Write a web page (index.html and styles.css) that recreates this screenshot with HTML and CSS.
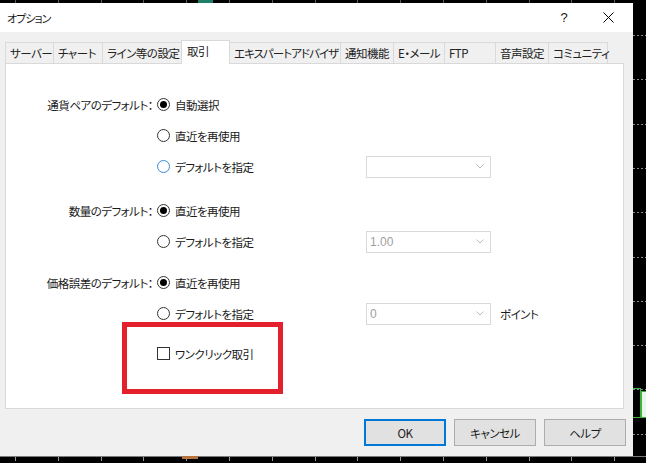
FILE: index.html
```html
<!DOCTYPE html>
<html lang="ja">
<head>
<meta charset="utf-8">
<title>オプション</title>
<link rel="stylesheet" href="styles.css">
</head>
<body>
<div class="desk">
  <div class="chart">
    <div class="top-ticks"></div>
    <div class="mark-top"></div>
    <div class="grid-right"></div>
    <div class="candle-a"></div>
    <div class="candle-b"></div>
    <div class="axis"></div>
    <div class="mark-bottom"></div>
  </div>

  <div class="dialog">
    <div class="titlebar">
      <span class="title">オプション</span>
      <div class="tb-btns">
        <span class="tb-btn help">?</span>
        <span class="tb-btn close">
          <svg width="11" height="11" viewBox="0 0 11 11"><path d="M0.5 0.5 L10.5 10.5 M10.5 0.5 L0.5 10.5" stroke="#000" stroke-width="1" fill="none"/></svg>
        </span>
      </div>
    </div>

    <div class="body">
      <div class="tabs">
        <div class="tab t1">サーバー</div>
        <div class="tab t2">チャート</div>
        <div class="tab t3">ライン等の設定</div>
        <div class="tab t4 active">取引</div>
        <div class="tab t5">エキスパートアドバイザ</div>
        <div class="tab t6">通知機能</div>
        <div class="tab t7">E・メール</div>
        <div class="tab t8">FTP</div>
        <div class="tab t9">音声設定</div>
        <div class="tab t10">コミュニティ</div>
      </div>

      <div class="panel">
        <div class="group g1">
          <div class="row">
            <span class="lbl">通貨ペアのデフォルト：</span>
            <span class="opt"><span class="radio checked"></span><span class="otext">自動選択</span></span>
          </div>
          <div class="row">
            <span class="lbl"></span>
            <span class="opt"><span class="radio"></span><span class="otext">直近を再使用</span></span>
          </div>
          <div class="row">
            <span class="lbl"></span>
            <span class="opt"><span class="radio hover"></span><span class="otext">デフォルトを指定</span></span>
            <span class="combo"><span class="cval"></span><svg class="chev" width="8" height="5" viewBox="0 0 8 5"><path d="M0.5 0.5 L4 4 L7.5 0.5" stroke="#b8b8b8" fill="none"/></svg></span>
          </div>
        </div>

        <div class="group g2">
          <div class="row">
            <span class="lbl">数量のデフォルト：</span>
            <span class="opt"><span class="radio checked"></span><span class="otext">直近を再使用</span></span>
          </div>
          <div class="row">
            <span class="lbl"></span>
            <span class="opt"><span class="radio"></span><span class="otext">デフォルトを指定</span></span>
            <span class="combo"><span class="cval">1.00</span><svg class="chev" width="8" height="5" viewBox="0 0 8 5"><path d="M0.5 0.5 L4 4 L7.5 0.5" stroke="#b8b8b8" fill="none"/></svg></span>
          </div>
        </div>

        <div class="group g3">
          <div class="row">
            <span class="lbl">価格誤差のデフォルト：</span>
            <span class="opt"><span class="radio checked"></span><span class="otext">直近を再使用</span></span>
          </div>
          <div class="row">
            <span class="lbl"></span>
            <span class="opt"><span class="radio"></span><span class="otext">デフォルトを指定</span></span>
            <span class="combo"><span class="cval">0</span><svg class="chev" width="8" height="5" viewBox="0 0 8 5"><path d="M0.5 0.5 L4 4 L7.5 0.5" stroke="#b8b8b8" fill="none"/></svg></span>
            <span class="unit">ポイント</span>
          </div>
        </div>

        <div class="row check-row">
          <span class="lbl"></span>
          <span class="opt"><span class="checkbox"></span><span class="otext">ワンクリック取引</span></span>
        </div>

        <div class="highlight"></div>
      </div>

      <div class="buttons">
        <div class="btn default">OK</div>
        <div class="btn">キャンセル</div>
        <div class="btn">ヘルプ</div>
      </div>
    </div>
  </div>
</div>
</body>
</html>
```

FILE: styles.css
```css
* { box-sizing: border-box; }

html, body {
  margin: 0;
  padding: 0;
}

body {
  background: #000;
  font-family: "Noto Sans CJK JP", "Noto Sans", sans-serif;
  font-size: 11.5px;
  letter-spacing: -0.5px;
  line-height: 16px;
  color: #1a1a1a;
  font-feature-settings: "palt";
}

.desk {
  position: relative;
  width: 646px;
  height: 463px;
  overflow: hidden;
  padding-top: 3px;
}

/* ---------- chart behind the dialog ---------- */
.chart {
  position: absolute;
  inset: 0;
}

.top-ticks {
  position: absolute;
  left: 0;
  top: 0;
  width: 646px;
  height: 3px;
  background: repeating-linear-gradient(to right, transparent 0 15px, #5a5a5a 15px 16px, transparent 16px 42.8px);
}

.mark-top {
  position: absolute;
  left: 198px;
  top: 0;
  width: 15px;
  height: 3px;
  background: #1e7f68;
}

.grid-right {
  position: absolute;
  left: 633px;
  top: 0;
  width: 13px;
  height: 456px;
  background: repeating-linear-gradient(to bottom, transparent 0 35px, #8a8a8a 35px 36px, transparent 36px 44.3px);
  -webkit-mask-image: repeating-linear-gradient(to right, #000 0 2px, transparent 2px 4px);
  mask-image: repeating-linear-gradient(to right, #000 0 2px, transparent 2px 4px);
}

.candle-a {
  position: absolute;
  left: 633px;
  top: 388px;
  width: 8px;
  height: 30px;
  border: 1px solid #3cb43c;
  border-left: none;
}

.candle-b {
  position: absolute;
  left: 641px;
  top: 391px;
  width: 7px;
  height: 27px;
  background: #e6f7e6;
  border: 1px solid #3cb43c;
}

.axis {
  position: absolute;
  left: 0;
  top: 456px;
  width: 646px;
  height: 7px;
  border-top: 1px solid #7a7a7a;
  background: repeating-linear-gradient(to right, transparent 0 15px, #9a9a9a 15px 16px, transparent 16px 42.8px) 0 0 / 646px 4px no-repeat;
}

.mark-bottom {
  position: absolute;
  left: 182px;
  top: 456px;
  width: 16px;
  height: 3px;
  background: #b8743c;
}

/* ---------- dialog ---------- */
.dialog {
  position: relative;
  width: 633px;
  height: 453px;
  background: #f0f0f0;
  display: flex;
  flex-direction: column;
}

.titlebar {
  height: 29px;
  background: #fff;
  display: flex;
  align-items: center;
  justify-content: space-between;
}

.title {
  padding-left: 7px;
  font-size: 11px;
  letter-spacing: -1px;
}

.tb-btns {
  display: flex;
  padding-right: 3px;
  height: 29px;
}

.tb-btn {
  width: 43px;
  height: 29px;
  display: flex;
  align-items: center;
  justify-content: center;
}

.help {
  font-family: "Liberation Sans", sans-serif;
  font-size: 13px;
  letter-spacing: 0;
  padding-right: 3px;
}

.body {
  flex: 1;
  padding-left: 5px;
}

/* ---------- tabs ---------- */
.tabs {
  display: flex;
  align-items: flex-end;
  height: 32px;
}

.tab {
  height: 22px;
  padding-left: 4px;
  padding-top: 2px;
  border-top: 1px solid #dadada;
  border-left: 1px solid #dadada;
  background: #f0f0f0;
  white-space: nowrap;
  color: #222;
}

.tab.t10 { border-right: 1px solid #dadada; }

.t1 { width: 48px; }
.t2 { width: 49px; }
.t3 { width: 79px; }
.t4 { width: 49px; }
.t5 { width: 110px; letter-spacing: -0.95px; }
.t6 { width: 53px; }
.t7 { width: 51px; }
.t8 { width: 51px; }
.t9 { width: 53px; }
.t10 { width: 60px; }

.tab.active {
  position: relative;
  z-index: 2;
  height: 24px;
  background: #fff;
  border: 1px solid #d9d9d9;
  border-bottom: none;
  padding-left: 5px;
  padding-top: 2px;
}

.tab.active + .tab { border-left: none; }

/* ---------- panel ---------- */
.panel {
  position: relative;
  margin-top: -1px;
  width: 619px;
  height: 346px;
  background: #fff;
  border: 1px solid #d9d9d9;
  padding-top: 25px;
}

.group.g2 { margin-top: 13px; }
.group.g3 { margin-top: 10px; }

.row {
  display: flex;
  align-items: center;
  height: 31px;
}

.lbl {
  width: 147px;
  margin-right: 4px;
  text-align: right;
  white-space: nowrap;
}

.opt {
  display: flex;
  align-items: center;
  width: 209px;
}

.otext {
  margin-left: 5px;
  white-space: nowrap;
}

.radio {
  width: 13px;
  height: 13px;
  border: 1px solid #333;
  border-radius: 50%;
  background: #fff;
  display: flex;
  align-items: center;
  justify-content: center;
  flex: none;
}

.radio.checked::after {
  content: "";
  width: 7px;
  height: 7px;
  border-radius: 50%;
  background: #000;
}

.radio.hover {
  border-color: #3a8bd8;
}

.checkbox {
  width: 13px;
  height: 13px;
  border: 1px solid #333;
  background: #fff;
  flex: none;
}

.combo {
  width: 125px;
  height: 22px;
  border: 1px solid #d9d9d9;
  background: #fff;
  display: flex;
  align-items: center;
  justify-content: space-between;
  padding: 0 6px 0 3px;
  color: #a0a0a0;
}

.cval {
  font-family: "Liberation Sans", "Noto Sans", sans-serif;
  font-size: 12px;
  letter-spacing: 0;
}

.unit {
  margin-left: 9px;
}

.check-row {
  margin-top: 9px;
}

.highlight {
  position: absolute;
  left: 116px;
  top: 258px;
  width: 161px;
  height: 72px;
  border: 5px solid #e3202c;
}

/* ---------- buttons ---------- */
.buttons {
  display: flex;
  justify-content: flex-end;
  gap: 8px;
  margin-top: 10px;
  padding-right: 7px;
}

.btn {
  width: 82px;
  height: 27px;
  background: #e1e1e1;
  border: 1px solid #adadad;
  display: flex;
  align-items: center;
  justify-content: center;
}

.btn.default {
  border: 1px solid #0078d7;
  box-shadow: inset 0 0 0 1px #0078d7;
}
```
